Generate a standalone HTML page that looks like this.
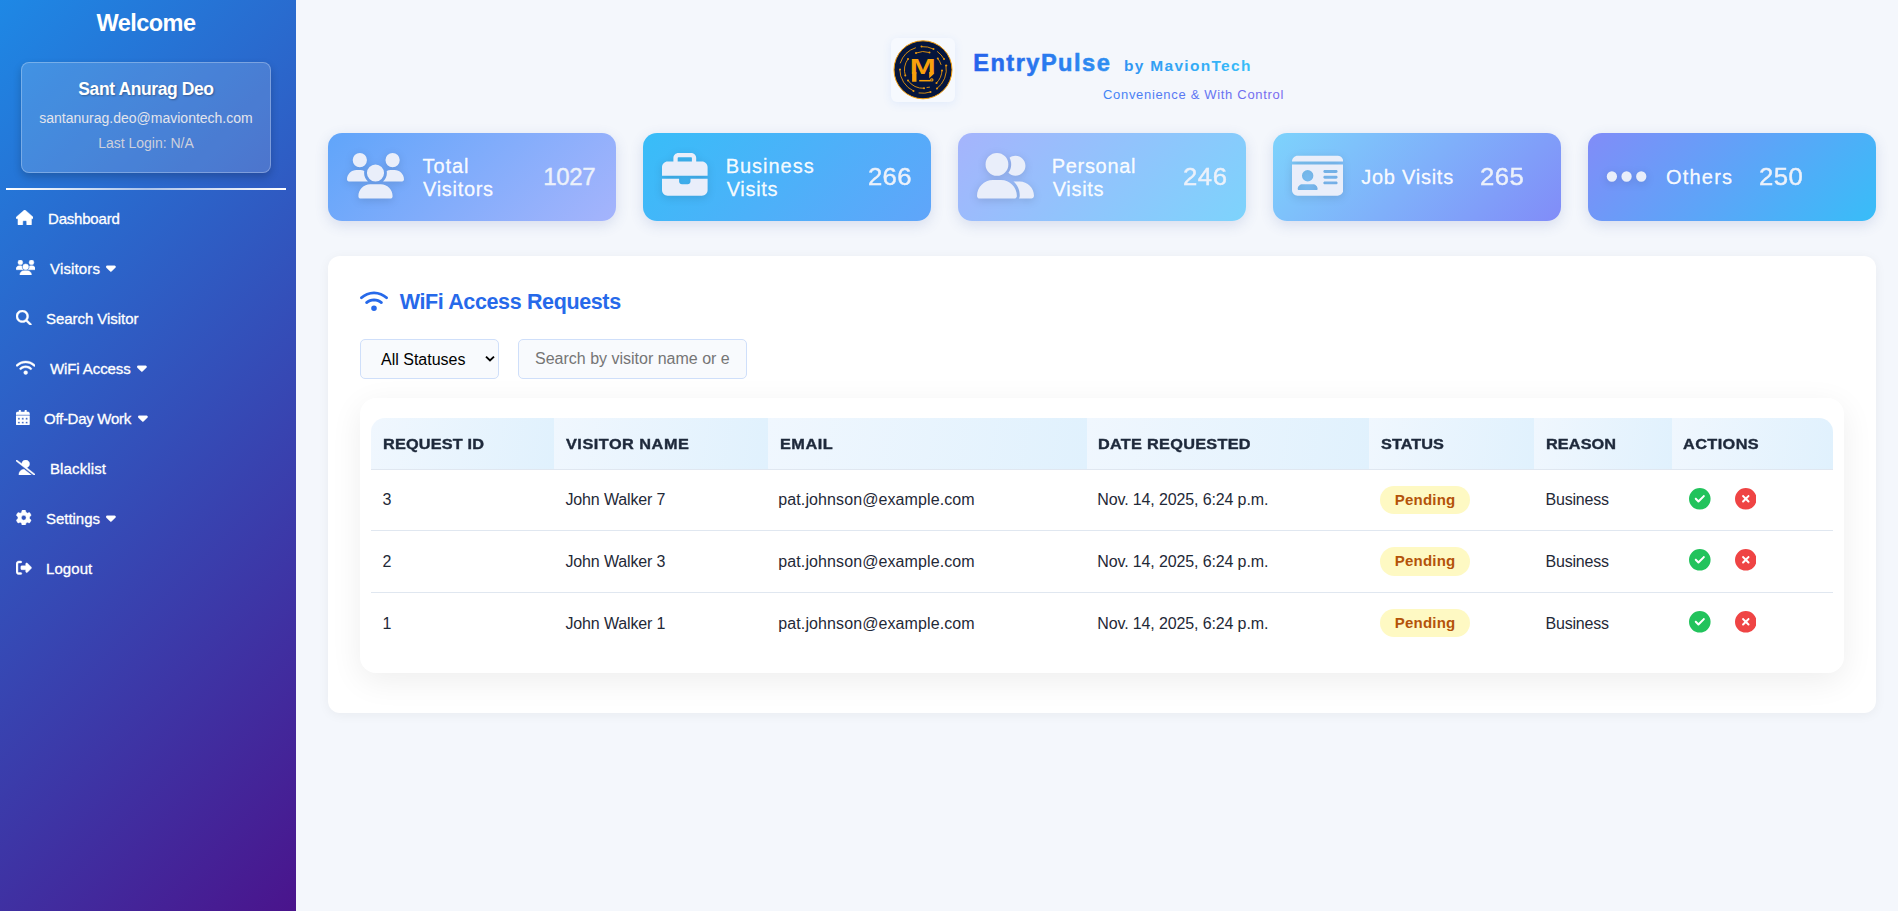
<!DOCTYPE html>
<html lang="en">
<head>
<meta charset="utf-8">
<title>EntryPulse - WiFi Access Requests</title>
<style>
*{box-sizing:border-box;margin:0;padding:0}
html,body{width:1898px;height:911px;overflow:hidden}
body{background:#f4f7fc;font-family:"Liberation Sans",Arial,sans-serif;color:#1f2937;position:relative}
.abs{position:absolute;white-space:nowrap}
svg{display:block}
/* SIDEBAR */
#sidebar{position:absolute;left:0;top:0;width:296px;height:911px;background:linear-gradient(135deg,#1e88e5 0%,#4a148c 100%);color:#fff}
#welcome{left:0;width:292px;top:8.5px;text-align:center;font-weight:bold;font-size:23.5px;line-height:28px;letter-spacing:-.54px}
#ucard{position:absolute;left:21px;top:62px;width:250px;height:111px;border-radius:8px;background:rgba(255,255,255,.15);border:1px solid rgba(255,255,255,.28);box-shadow:0 4px 8px rgba(0,0,0,.2)}
#ucard div{position:absolute;left:0;width:248px;text-align:center;white-space:nowrap}
#uname{top:15px;font-weight:bold;font-size:17.5px;line-height:22px;letter-spacing:-.4px;text-shadow:1px 1px 2px rgba(0,0,0,.3)}
#umail{top:46px;font-size:14px;line-height:18px;color:#e2e4ec}
#ulast{top:71px;font-size:14px;line-height:18px;color:#cdd0dc}
#shr{position:absolute;left:6px;top:188px;width:280px;height:2px;background:linear-gradient(90deg,#fff,rgba(255,255,255,.6),#fff)}
.mi{position:absolute;left:0;width:296px;height:50px}
.mi svg{position:absolute;left:16px;fill:#fff;stroke:#fff;stroke-width:14px}
.mi span{position:absolute;top:15.5px;font-size:15px;line-height:20px;white-space:nowrap;color:#fff;-webkit-text-stroke:.3px #fff}
.mi svg.car{left:auto}
/* MAIN */
#main{position:absolute;left:0;top:0;width:1898px;height:911px}
#sidebar{z-index:2}
#logo{position:absolute;left:891px;top:38px;width:64px;height:64px;border-radius:6px;background:#f6f9fe;box-shadow:0 2px 10px rgba(59,130,246,.10)}
.card{position:absolute;top:133px;width:288px;height:88px;border-radius:14px;box-shadow:0 4px 14px rgba(60,90,160,.16)}
.card svg.cic{position:absolute;fill:#e9eefa;filter:drop-shadow(0 2px 4px rgba(0,0,0,.12))}
.clab{position:absolute;margin-top:-.4px;white-space:nowrap;font-size:20px;line-height:24px;color:rgba(255,255,255,.95);letter-spacing:.7px;-webkit-text-stroke:.3px rgba(255,255,255,.95)}
.cnum{position:absolute;top:28px;white-space:nowrap;font-size:24px;line-height:32px;color:#ecf1fa;letter-spacing:.5px;-webkit-text-stroke:.4px #ecf1fa}
#panel{position:absolute;left:328px;top:256px;width:1548px;height:457px;border-radius:12px;background:#fff;box-shadow:0 2px 12px rgba(0,0,0,.05)}
#ptitle svg{position:absolute}
#ptxt{left:71.7px;top:31.7px;font-weight:bold;font-size:21.5px;line-height:28px;color:#2669ea;letter-spacing:-.37px}
#sel{position:absolute;left:32px;top:83px;width:139px;height:40px;border:1px solid #cfdffa;border-radius:5px;background:#f8fafd}
#seltxt{position:absolute;left:20px;top:10px;font-size:16px;line-height:19px;color:#000;white-space:nowrap}
#inp{position:absolute;left:190px;top:83px;width:229px;height:40px;border:1px solid #cfdffa;border-radius:5px;background:#f8fafd;overflow:hidden}
#inp span{position:absolute;left:16px;top:9px;width:195px;overflow:hidden;font-size:16px;line-height:19px;color:#757575;white-space:nowrap}
#tcont{position:absolute;left:32px;top:142px;width:1484px;height:275px;border-radius:16px;background:#fff;box-shadow:0 8px 32px rgba(0,0,0,.07)}
.th{position:absolute;top:20px;height:51px;background:linear-gradient(100deg,#f0f7fe 0%,#e0f1fd 100%)}
.th span{position:absolute;left:12px;top:16.2px;font-weight:bold;font-size:15.5px;line-height:20px;color:#1e293b;white-space:nowrap;letter-spacing:.4px;display:inline-block;transform:scaleX(1.05);transform-origin:0 50%;-webkit-text-stroke:.4px #1e293b}
.hline{position:absolute;left:11px;width:1462px;height:1px;background:#e0e7f0}
.tr{position:absolute;left:0;width:1484px;height:61px}
.td{position:absolute;top:20px;margin-left:-.5px;font-size:16px;line-height:20px;color:#1f2937;white-space:nowrap}
.badge{position:absolute;width:90px;background:#fef9c3}
.bt{position:absolute;font-weight:bold;font-size:15px;line-height:20px;color:#b45309;letter-spacing:.2px;white-space:nowrap}
svg.ab{position:absolute}
</style>
</head>
<body>
<div id="sidebar">
  <div class="abs" id="welcome">Welcome</div>
  <div id="ucard">
    <div id="uname">Sant Anurag Deo</div>
    <div id="umail">santanurag.deo@maviontech.com</div>
    <div id="ulast">Last Login: N/A</div>
  </div>
  <div id="shr"></div>
  <div class="mi" style="top:193px"><svg style="top:16.6px" width="17.4375" height="15.5" viewBox="0 0 576 512"><path d="M575.8 255.5c0 18-15 32.1-32 32.1h-32l.7 160.2c0 2.7-.2 5.4-.5 8.1V472c0 22.1-17.9 40-40 40H456c-1.1 0-2.2 0-3.3-.1c-1.4 .1-2.8 .1-4.2 .1H416 392c-22.1 0-40-17.9-40-40V448 384c0-17.7-14.3-32-32-32H256c-17.7 0-32 14.3-32 32v64 24c0 22.1-17.9 40-40 40H160 128.1c-1.5 0-3-.1-4.5-.2c-1.2 .1-2.4 .2-3.6 .2H104c-22.1 0-40-17.9-40-40V360c0-.9 0-1.9 .1-2.8V287.6H32c-18 0-32-14-32-32.1c0-9 3-17 10-24L266.4 8c7-7 15-8 22-8s15 2 21 7L564.8 231.5c8 7 12 15 11 24z"/></svg><span id="m0" style="left:48px;letter-spacing:-0.2px">Dashboard</span></div>
  <div class="mi" style="top:243px"><svg style="top:16.6px" width="19.375" height="15.5" viewBox="0 0 640 512"><path d="M144 0a80 80 0 1 1 0 160A80 80 0 1 1 144 0zM512 0a80 80 0 1 1 0 160A80 80 0 1 1 512 0zM0 298.7C0 239.8 47.8 192 106.7 192h42.7c15.9 0 31 3.5 44.6 9.7c-1.3 7.2-1.9 14.7-1.9 22.3c0 38.2 16.8 72.5 43.3 96c-.2 0-.4 0-.7 0H21.3C9.6 320 0 310.4 0 298.7zM405.3 320c-.2 0-.4 0-.7 0c26.6-23.5 43.3-57.8 43.3-96c0-7.6-.7-15-1.9-22.3c13.6-6.3 28.7-9.7 44.6-9.7h42.7C592.2 192 640 239.8 640 298.7c0 11.8-9.6 21.3-21.3 21.3H405.3zM224 224a96 96 0 1 1 192 0 96 96 0 1 1 -192 0zM128 485.3C128 411.7 187.7 352 261.3 352H378.7C452.3 352 512 411.7 512 485.3c0 14.7-11.9 26.7-26.7 26.7H154.7c-14.7 0-26.7-11.9-26.7-26.7z"/></svg><span id="m1" style="left:50px;letter-spacing:0.16px">Visitors</span><svg class="car" style="left:106px;top:16.6px" width="9.6875" height="15.5" viewBox="0 0 320 512"><path d="M137.4 374.6c12.5 12.5 32.8 12.5 45.3 0l128-128c9.2-9.2 11.9-22.9 6.9-34.9s-16.6-19.8-29.6-19.8L32 192c-12.9 0-24.6 7.8-29.6 19.8s-2.2 25.7 6.9 34.9l128 128z"/></svg></div>
  <div class="mi" style="top:293px"><svg style="top:16.6px" width="15.5" height="15.5" viewBox="0 0 512 512"><path d="M416 208c0 45.9-14.9 88.3-40 122.7L502.6 457.4c12.5 12.5 12.5 32.8 0 45.3s-32.8 12.5-45.3 0L330.7 376c-34.4 25.2-76.8 40-122.7 40C93.1 416 0 322.9 0 208S93.1 0 208 0S416 93.1 416 208zM208 352a144 144 0 1 0 0-288 144 144 0 1 0 0 288z"/></svg><span id="m2" style="left:46px;letter-spacing:-0.05px">Search Visitor</span></div>
  <div class="mi" style="top:343px"><svg style="top:16.6px" width="19.375" height="15.5" viewBox="0 0 640 512"><path d="M54.2 202.9C123.2 136.7 216.8 96 320 96s196.8 40.7 265.8 106.9c12.8 12.2 33 11.8 45.2-.9s11.8-33-.9-45.2C548.8 79.6 440.6 32 320 32S91.2 79.6 9.8 156.7C-2.9 169-3.3 189.2 8.9 202s32.5 13.2 45.2 .9zM320 256c56.8 0 108.6 21.1 148.2 56c13.3 11.7 33.5 10.4 45.2-2.8s10.4-33.5-2.8-45.2C459.8 219.2 393 192 320 192s-139.8 27.2-190.5 72c-13.3 11.7-14.5 31.9-2.8 45.2s31.9 14.5 45.2 2.8c39.5-34.9 91.3-56 148.2-56zm64 160a64 64 0 1 0 -128 0 64 64 0 1 0 128 0z"/></svg><span id="m3" style="left:50px;letter-spacing:-0.1px">WiFi Access</span><svg class="car" style="left:137px;top:16.6px" width="9.6875" height="15.5" viewBox="0 0 320 512"><path d="M137.4 374.6c12.5 12.5 32.8 12.5 45.3 0l128-128c9.2-9.2 11.9-22.9 6.9-34.9s-16.6-19.8-29.6-19.8L32 192c-12.9 0-24.6 7.8-29.6 19.8s-2.2 25.7 6.9 34.9l128 128z"/></svg></div>
  <div class="mi" style="top:393px"><svg style="top:16.6px" width="13.5625" height="15.5" viewBox="0 0 448 512"><path d="M128 0c17.7 0 32 14.3 32 32V64H288V32c0-17.7 14.3-32 32-32s32 14.3 32 32V64h48c26.5 0 48 21.5 48 48v48H0V112C0 85.5 21.5 64 48 64H96V32c0-17.7 14.3-32 32-32zM0 192H448V464c0 26.5-21.5 48-48 48H48c-26.5 0-48-21.5-48-48V192zm64 80v32c0 8.8 7.2 16 16 16h32c8.8 0 16-7.2 16-16V272c0-8.8-7.2-16-16-16H80c-8.8 0-16 7.2-16 16zm128 0v32c0 8.8 7.2 16 16 16h32c8.8 0 16-7.2 16-16V272c0-8.8-7.2-16-16-16H208c-8.8 0-16 7.2-16 16zm144-16c-8.8 0-16 7.2-16 16v32c0 8.8 7.2 16 16 16h32c8.8 0 16-7.2 16-16V272c0-8.8-7.2-16-16-16H336zM64 400v32c0 8.8 7.2 16 16 16h32c8.8 0 16-7.2 16-16V400c0-8.8-7.2-16-16-16H80c-8.8 0-16 7.2-16 16zm144-16c-8.8 0-16 7.2-16 16v32c0 8.8 7.2 16 16 16h32c8.8 0 16-7.2 16-16V400c0-8.8-7.2-16-16-16H208zm112 16v32c0 8.8 7.2 16 16 16h32c8.8 0 16-7.2 16-16V400c0-8.8-7.2-16-16-16H336c-8.8 0-16 7.2-16 16z"/></svg><span id="m4" style="left:44px;letter-spacing:-0.28px">Off-Day Work</span><svg class="car" style="left:138px;top:16.6px" width="9.6875" height="15.5" viewBox="0 0 320 512"><path d="M137.4 374.6c12.5 12.5 32.8 12.5 45.3 0l128-128c9.2-9.2 11.9-22.9 6.9-34.9s-16.6-19.8-29.6-19.8L32 192c-12.9 0-24.6 7.8-29.6 19.8s-2.2 25.7 6.9 34.9l128 128z"/></svg></div>
  <div class="mi" style="top:443px"><svg style="top:16.6px" width="19.375" height="15.5" viewBox="0 0 640 512"><path d="M38.8 5.1C28.4-3.1 13.3-1.2 5.1 9.2S-1.2 34.7 9.2 42.9l592 464c10.4 8.2 25.5 6.3 33.7-4.1s6.3-25.5-4.1-33.7L353.3 251.6C407.9 237 448 187.2 448 128C448 57.3 390.7 0 320 0C250.2 0 193.5 55.8 192 125.2L38.8 5.1zM264.3 304.3C170.5 309.4 96 387.2 96 482.3c0 16.4 13.3 29.7 29.7 29.7H514.3c3.9 0 7.6-.7 11-2.1l-261-205.6z"/></svg><span id="m5" style="left:50px;letter-spacing:0.12px">Blacklist</span></div>
  <div class="mi" style="top:493px"><svg style="top:16.6px" width="15.5" height="15.5" viewBox="0 0 512 512"><path d="M495.9 166.6c3.2 8.7 .5 18.4-6.4 24.6l-43.3 39.4c1.1 8.3 1.7 16.8 1.7 25.4s-.6 17.1-1.7 25.4l43.3 39.4c6.9 6.2 9.6 15.9 6.4 24.6c-4.4 11.9-9.7 23.3-15.8 34.3l-4.7 8.1c-6.6 11-14 21.4-22.1 31.2c-5.9 7.2-15.7 9.6-24.5 6.8l-55.7-17.7c-13.4 10.3-28.2 18.9-44 25.4l-12.5 57.1c-2 9.1-9 16.3-18.2 17.8c-13.8 2.3-28 3.5-42.5 3.5s-28.7-1.2-42.5-3.5c-9.2-1.5-16.2-8.7-18.2-17.8l-12.5-57.1c-15.8-6.500000000000001-30.6-15.1-44-25.4L83.1 425.9c-8.8 2.8-18.6 .3-24.5-6.8c-8.1-9.8-15.5-20.2-22.1-31.2l-4.7-8.1c-6.1-11-11.4-22.4-15.8-34.3c-3.2-8.7-.5-18.4 6.4-24.6l43.3-39.4C64.6 273.1 64 264.6 64 256s.6-17.1 1.7-25.4L22.4 191.2c-6.9-6.2-9.6-15.9-6.4-24.6c4.4-11.9 9.7-23.3 15.8-34.3l4.7-8.1c6.6-11 14-21.4 22.1-31.2c5.9-7.2 15.7-9.6 24.5-6.8l55.7 17.7c13.4-10.3 28.2-18.9 44-25.4l12.5-57.1c2-9.1 9-16.3 18.2-17.8C227.3 1.2 241.5 0 256 0s28.7 1.2 42.5 3.5c9.2 1.5 16.2 8.7 18.2 17.8l12.5 57.1c15.8 6.5 30.6 15.1 44 25.4l55.7-17.7c8.8-2.8 18.6-.3 24.5 6.8c8.1 9.8 15.5 20.2 22.1 31.2l4.7 8.1c6.1 11 11.4 22.4 15.8 34.3zM256 336a80 80 0 1 0 0-160 80 80 0 1 0 0 160z"/></svg><span id="m6" style="left:46px;letter-spacing:-0.03px">Settings</span><svg class="car" style="left:106px;top:16.6px" width="9.6875" height="15.5" viewBox="0 0 320 512"><path d="M137.4 374.6c12.5 12.5 32.8 12.5 45.3 0l128-128c9.2-9.2 11.9-22.9 6.9-34.9s-16.6-19.8-29.6-19.8L32 192c-12.9 0-24.6 7.8-29.6 19.8s-2.2 25.7 6.9 34.9l128 128z"/></svg></div>
  <div class="mi" style="top:543px"><svg style="top:16.6px" width="15.5" height="15.5" viewBox="0 0 512 512"><path d="M377.9 105.9L500.7 228.7c7.2 7.2 11.3 17.1 11.3 27.3s-4.1 20.1-11.3 27.3L377.9 406.1c-6.4 6.4-15 9.9-24 9.9c-18.7 0-33.9-15.2-33.9-33.9l0-62.1-128 0c-17.7 0-32-14.3-32-32l0-64c0-17.7 14.3-32 32-32l128 0 0-62.1c0-18.7 15.2-33.9 33.9-33.9c9 0 17.6 3.6 24 9.9zM160 96L96 96c-17.7 0-32 14.3-32 32l0 256c0 17.7 14.3 32 32 32l64 0c17.7 0 32 14.3 32 32s-14.3 32-32 32l-64 0c-53 0-96-43-96-96L0 128C0 75 43 32 96 32l64 0c17.7 0 32 14.3 32 32s-14.3 32-32 32z"/></svg><span id="m7" style="left:46px;letter-spacing:0.08px">Logout</span></div>
</div>
<div id="main">
<!--MAINSTART-->

  <div id="logo"><svg width="64" height="64" viewBox="0 0 64 64">
    <circle cx="32" cy="31.8" r="29" fill="#05153d" stroke="#f59e0b" stroke-width="1"/>
    <g fill="none" stroke="#e8960c" stroke-width="0.9" stroke-linecap="round">
      <path d="M30.5 8.6 A23.5 23.5 0 0 1 42.5 11"/>
      <path d="M46.5 13.6 A23.5 23.5 0 0 1 53 21"/>
      <path d="M55 27.5 A23.5 23.5 0 0 1 46 50.5"/>
      <path d="M39.5 54 A23.5 23.5 0 0 1 28 55"/>
      <path d="M22.5 53 A23.5 23.5 0 0 1 8.8 31.5"/>
      <path d="M9.3 25 A23.5 23.5 0 0 1 24.5 9.8"/>
      <path d="M25 15 A18.5 18.5 0 0 1 38.5 14.5"/>
      <path d="M46.8 20.5 A18.5 18.5 0 0 1 50 26.5"/>
      <path d="M51 32.5 A18.5 18.5 0 0 1 45.5 45"/>
      <path d="M33 50.3 A18.5 18.5 0 0 1 17 42.5"/>
      <path d="M14.3 37.5 A18.5 18.5 0 0 1 17 21"/>
      <path d="M36 49.5 L38.5 49.2"/>
    </g>
    <g fill="#e8960c">
      <circle cx="30.5" cy="8.6" r="1"/><circle cx="42.5" cy="11" r="1"/><circle cx="53" cy="21" r="1"/><circle cx="55.2" cy="27.5" r="1.1"/><circle cx="46" cy="50.5" r="1"/>
      <circle cx="39.5" cy="54" r="1"/><circle cx="22.5" cy="53" r="1"/><circle cx="9" cy="31.5" r="1"/><circle cx="25" cy="15" r="1"/><circle cx="38.5" cy="14.5" r="1"/>
      <circle cx="46.8" cy="20.5" r="1"/><circle cx="51" cy="32.5" r="1"/><circle cx="45.5" cy="45" r="1"/><circle cx="33" cy="50.3" r="1"/><circle cx="17" cy="42.5" r="1"/><circle cx="14.3" cy="37.5" r="1"/><circle cx="17" cy="21" r="1"/>
    </g>
    <text id="logoM" x="0" y="35.9" text-anchor="middle" font-family="Liberation Sans, Arial, sans-serif" font-weight="bold" font-size="22" fill="#f7a10c" transform="translate(31.85 0) scale(1.42 1)">M</text>
    <path d="M21.1 34 H25.5 V43.8 H21.1 Z M38.2 34 H42.6 V36.2 L38.2 40.2 Z" fill="#f7a10c"/>
    <path d="M28.2 42.7 H39.6" stroke="#f7a10c" stroke-width="1.5" fill="none"/>
    <circle cx="40.8" cy="41.9" r="1.7" fill="#f7a10c"/>
    <circle cx="40.8" cy="41.9" r="0.6" fill="#05153d"/>
  </svg></div>
  <svg id="brandtxt" width="340" height="72" viewBox="0 0 340 72" style="position:absolute;left:965px;top:40px;overflow:visible">
    <defs>
      <linearGradient id="gb1" gradientUnits="userSpaceOnUse" x1="9" y1="0" x2="285" y2="0"><stop offset="0" stop-color="#2563eb"/><stop offset="1" stop-color="#38bdf8"/></linearGradient>
      <linearGradient id="gb2" gradientUnits="userSpaceOnUse" x1="138" y1="0" x2="318" y2="0"><stop offset="0" stop-color="#3f84f5"/><stop offset="1" stop-color="#7b68ee"/></linearGradient>
    </defs>
    <text id="bname" x="8.2" y="31.3" font-family="Liberation Sans, Arial, sans-serif" font-weight="bold" font-size="23.6" letter-spacing="1.48" fill="url(#gb1)" stroke="url(#gb1)" stroke-width=".55">EntryPulse</text>
    <text id="bby" x="159" y="31.3" font-family="Liberation Sans, Arial, sans-serif" font-weight="bold" font-size="15.5" letter-spacing="1.3" fill="url(#gb1)">by MavionTech</text>
    <text id="btag" x="138" y="59.1" font-family="Liberation Sans, Arial, sans-serif" font-size="13" letter-spacing=".68" fill="url(#gb2)">Convenience &amp; With Control</text>
  </svg>
  <div class="card" style="left:328px;background:linear-gradient(135deg,#60a5fa 0%,#a5b4fc 100%)"><svg class="cic" style="left:19px;top:20.2px" width="57" height="45.6" viewBox="0 0 640 512"><path d="M144 0a80 80 0 1 1 0 160A80 80 0 1 1 144 0zM512 0a80 80 0 1 1 0 160A80 80 0 1 1 512 0zM0 298.7C0 239.8 47.8 192 106.7 192h42.7c15.9 0 31 3.5 44.6 9.7c-1.3 7.2-1.9 14.7-1.9 22.3c0 38.2 16.8 72.5 43.3 96c-.2 0-.4 0-.7 0H21.3C9.6 320 0 310.4 0 298.7zM405.3 320c-.2 0-.4 0-.7 0c26.6-23.5 43.3-57.8 43.3-96c0-7.6-.7-15-1.9-22.3c13.6-6.3 28.7-9.7 44.6-9.7h42.7C592.2 192 640 239.8 640 298.7c0 11.8-9.6 21.3-21.3 21.3H405.3zM224 224a96 96 0 1 1 192 0 96 96 0 1 1 -192 0zM128 485.3C128 411.7 187.7 352 261.3 352H378.7C452.3 352 512 411.7 512 485.3c0 14.7-11.9 26.7-26.7 26.7H154.7c-14.7 0-26.7-11.9-26.7-26.7z"/></svg><div class="clab" id="cl0a" style="left:94.5px;top:21px;letter-spacing:0.95px">Total</div><div class="clab" id="cl0b" style="left:95px;top:44px">Visitors</div><div class="cnum" id="cn0" style="left:215.3px;letter-spacing:-0.4px">1027</div></div>
  <div class="card" style="left:643px;background:linear-gradient(135deg,#38bdf8 0%,#60a5fa 100%)"><svg class="cic" style="left:19px;top:20.2px" width="45.6" height="45.6" viewBox="0 0 512 512"><path d="M184 48H328c4.4 0 8 3.6 8 8V96H176V56c0-4.4 3.6-8 8-8zm-56 8V96H64C28.7 96 0 124.7 0 160v96H192 320 512V160c0-35.3-28.7-64-64-64H384V56c0-30.9-25.1-56-56-56H184c-30.9 0-56 25.1-56 56zM512 288H320v32c0 17.7-14.3 32-32 32H224c-17.7 0-32-14.3-32-32V288H0V416c0 35.3 28.7 64 64 64H448c35.3 0 64-28.7 64-64V288z"/></svg><div class="clab" id="cl1a" style="left:82.7px;top:21px;letter-spacing:0.98px">Business</div><div class="clab" id="cl1b" style="left:83.7px;top:44px">Visits</div><div class="cnum" id="cn1" style="left:224.8px;letter-spacing:0.3px;transform:scaleX(1.07);transform-origin:0 50%">266</div></div>
  <div class="card" style="left:958px;background:linear-gradient(135deg,#a5b4fc 0%,#7dd3fc 100%)"><svg class="cic" style="left:19px;top:20.2px" width="57" height="45.6" viewBox="0 0 640 512"><path d="M96 128a128 128 0 1 1 256 0A128 128 0 1 1 96 128zM0 482.3C0 383.8 79.8 304 178.3 304h91.4C368.2 304 448 383.8 448 482.3c0 16.4-13.3 29.7-29.7 29.7H29.7C13.3 512 0 498.7 0 482.3zM609.3 512H471.4c5.4-9.4 8.6-20.3 8.6-32v-8c0-60.7-27.1-115.2-69.8-151.8c2.4-.1 4.7-.2 7.1-.2h61.4C567.8 320 640 392.2 640 481.3c0 17-13.8 30.7-30.7 30.7zM432 256c-31 0-59-12.6-79.3-32.9C372.4 196.5 384 163.6 384 128c0-26.8-6.6-52.1-18.3-74.3C384.3 40.1 407.2 32 432 32c61.9 0 112 50.1 112 112s-50.1 112-112 112z"/></svg><div class="clab" id="cl2a" style="left:93.7px;top:21px;letter-spacing:0.7px">Personal</div><div class="clab" id="cl2b" style="left:94.7px;top:44px">Visits</div><div class="cnum" id="cn2" style="left:225.3px;letter-spacing:0.5px;transform:scaleX(1.07);transform-origin:0 50%">246</div></div>
  <div class="card" style="left:1273px;background:linear-gradient(135deg,#7dd3fc 0%,#818cf8 100%)"><svg class="cic" style="left:19px;top:20.2px" width="51.3" height="45.6" viewBox="0 0 576 512"><path d="M0 96l576 0c0-35.3-28.7-64-64-64L64 32C28.7 32 0 60.7 0 96zm0 32L0 416c0 35.3 28.7 64 64 64l448 0c35.3 0 64-28.7 64-64l0-288L0 128zM64 405.3c0-29.5 23.9-53.3 53.3-53.3l117.3 0c29.5 0 53.3 23.9 53.3 53.3c0 5.9-4.8 10.7-10.7 10.7L74.7 416c-5.9 0-10.7-4.8-10.7-10.7zM176 192a64 64 0 1 1 0 128 64 64 0 1 1 0-128zm176 16c0-8.8 7.2-16 16-16l128 0c8.8 0 16 7.2 16 16s-7.2 16-16 16l-128 0c-8.8 0-16-7.2-16-16zm0 64c0-8.8 7.2-16 16-16l128 0c8.8 0 16 7.2 16 16s-7.2 16-16 16l-128 0c-8.8 0-16-7.2-16-16zm0 64c0-8.8 7.2-16 16-16l128 0c8.8 0 16 7.2 16 16s-7.2 16-16 16l-128 0c-8.8 0-16-7.2-16-16z"/></svg><div class="clab" id="cl3a" style="left:88.2px;top:32px;letter-spacing:0.75px">Job Visits</div><div class="cnum" id="cn3" style="left:207.3px;letter-spacing:0.4px;transform:scaleX(1.07);transform-origin:0 50%">265</div></div>
  <div class="card" style="left:1588px;background:linear-gradient(135deg,#818cf8 0%,#38bdf8 100%)"><svg class="cic" style="left:18.4px;top:19.5px" width="41.125" height="47" viewBox="0 0 448 512"><path d="M8 256a56 56 0 1 1 112 0A56 56 0 1 1 8 256zm160 0a56 56 0 1 1 112 0 56 56 0 1 1 -112 0zm216-56a56 56 0 1 1 0 112 56 56 0 1 1 0-112z"/></svg><div class="clab" id="cl4a" style="left:78px;top:32px;letter-spacing:1.2px">Others</div><div class="cnum" id="cn4" style="left:171.2px;letter-spacing:0.4px;transform:scaleX(1.07);transform-origin:0 50%">250</div></div>
  <div id="panel">
    <div id="ptitle"><svg style="left:32px;top:33.7px;fill:#2669ea" width="28" height="22.4" viewBox="0 0 640 512"><path d="M54.2 202.9C123.2 136.7 216.8 96 320 96s196.8 40.7 265.8 106.9c12.8 12.2 33 11.8 45.2-.9s11.8-33-.9-45.2C548.8 79.6 440.6 32 320 32S91.2 79.6 9.8 156.7C-2.9 169-3.3 189.2 8.9 202s32.5 13.2 45.2 .9zM320 256c56.8 0 108.6 21.1 148.2 56c13.3 11.7 33.5 10.4 45.2-2.8s10.4-33.5-2.8-45.2C459.8 219.2 393 192 320 192s-139.8 27.2-190.5 72c-13.3 11.7-14.5 31.9-2.8 45.2s31.9 14.5 45.2 2.8c39.5-34.9 91.3-56 148.2-56zm64 160a64 64 0 1 0 -128 0 64 64 0 1 0 128 0z"/></svg><span class="abs" id="ptxt">WiFi Access Requests</span></div>
    <div id="sel"><span id="seltxt">All Statuses</span><svg width="12" height="8" viewBox="0 0 12 8" style="position:absolute;left:123px;top:15.4px"><path d="M2 1.6 L6 5.5 L10 1.6" fill="none" stroke="#000" stroke-width="1.9"/></svg></div>
    <div id="inp"><span id="inptxt">Search by visitor name or email</span></div>
    <div id="tcont">
      <div class="th" style="left:11px;width:183px;border-top-left-radius:14px;"><span id="th0" style="letter-spacing:0.16px">REQUEST ID</span></div>
      <div class="th" style="left:194px;width:214px;"><span id="th1" style="letter-spacing:0.48px">VISITOR NAME</span></div>
      <div class="th" style="left:408px;width:319px;"><span id="th2" style="letter-spacing:0.47px;margin-left:-0.4px">EMAIL</span></div>
      <div class="th" style="left:727px;width:282px;"><span id="th3" style="letter-spacing:0.27px;margin-left:-1px">DATE REQUESTED</span></div>
      <div class="th" style="left:1009px;width:165px;"><span id="th4" style="letter-spacing:0.04px">STATUS</span></div>
      <div class="th" style="left:1174px;width:138px;"><span id="th5" style="letter-spacing:0.09px;margin-left:-0.4px">REASON</span></div>
      <div class="th" style="left:1312px;width:161px;border-top-right-radius:14px;"><span id="th6" style="letter-spacing:0.39px;margin-left:-1px">ACTIONS</span></div>
      <div class="hline" style="top:71px"></div>
      <div class="tr" style="top:72px"><span class="td" id="td0_0" style="left:23px;letter-spacing:0px">3</span><span class="td" id="td0_1" style="left:206px;letter-spacing:-0.15px">John Walker 7</span><span class="td" id="td0_2" style="left:418.8px;letter-spacing:0.1px">pat.johnson@example.com</span><span class="td" id="td0_3" style="left:737.8px;letter-spacing:-0.13px">Nov. 14, 2025, 6:24 p.m.</span><span class="badge" style="left:1020px;top:15.8px;height:28.2px;border-radius:14.1px"></span><span class="bt" id="bd0" style="left:1034.8px;top:19.8px">Pending</span><span class="td" id="td0_5" style="left:1186px;letter-spacing:-0.19px">Business</span><svg class="ab" style="left:1329.3px;top:18.4px;fill:#22c35c" width="21.6" height="21.6" viewBox="0 0 512 512"><path d="M256 512A256 256 0 1 0 256 0a256 256 0 1 0 0 512zM369 209L241 337c-9.4 9.4-24.6 9.4-33.9 0l-64-64c-9.4-9.4-9.4-24.6 0-33.9s24.6-9.4 33.9 0l47 47L335 175c9.4-9.4 24.6-9.4 33.9 0s9.4 24.6 0 33.9z"/></svg><svg class="ab" style="left:1374.6px;top:18.4px;fill:#ef4444" width="21.6" height="21.6" viewBox="0 0 512 512"><path d="M256 512A256 256 0 1 0 256 0a256 256 0 1 0 0 512zM175 175c9.4-9.4 24.6-9.4 33.9 0l47 47 47-47c9.4-9.4 24.6-9.4 33.9 0s9.4 24.6 0 33.9l-47 47 47 47c9.4 9.4 9.4 24.6 0 33.9s-24.6 9.4-33.9 0l-47-47-47 47c-9.4 9.4-24.6 9.4-33.9 0s-9.4-24.6 0-33.9l47-47-47-47c-9.4-9.4-9.4-24.6 0-33.9z"/></svg></div>
      <div class="hline" style="top:132px"></div>
      <div class="tr" style="top:134px"><span class="td" id="td1_0" style="left:23px;letter-spacing:0px">2</span><span class="td" id="td1_1" style="left:206px;letter-spacing:-0.15px">John Walker 3</span><span class="td" id="td1_2" style="left:418.8px;letter-spacing:0.1px">pat.johnson@example.com</span><span class="td" id="td1_3" style="left:737.8px;letter-spacing:-0.13px">Nov. 14, 2025, 6:24 p.m.</span><span class="badge" style="left:1020px;top:14.9px;height:29.1px;border-radius:14.55px"></span><span class="bt" id="bd1" style="left:1034.8px;top:18.8px">Pending</span><span class="td" id="td1_5" style="left:1186px;letter-spacing:-0.19px">Business</span><svg class="ab" style="left:1329.3px;top:17.3px;fill:#22c35c" width="21.6" height="21.6" viewBox="0 0 512 512"><path d="M256 512A256 256 0 1 0 256 0a256 256 0 1 0 0 512zM369 209L241 337c-9.4 9.4-24.6 9.4-33.9 0l-64-64c-9.4-9.4-9.4-24.6 0-33.9s24.6-9.4 33.9 0l47 47L335 175c9.4-9.4 24.6-9.4 33.9 0s9.4 24.6 0 33.9z"/></svg><svg class="ab" style="left:1374.6px;top:17.3px;fill:#ef4444" width="21.6" height="21.6" viewBox="0 0 512 512"><path d="M256 512A256 256 0 1 0 256 0a256 256 0 1 0 0 512zM175 175c9.4-9.4 24.6-9.4 33.9 0l47 47 47-47c9.4-9.4 24.6-9.4 33.9 0s9.4 24.6 0 33.9l-47 47 47 47c9.4 9.4 9.4 24.6 0 33.9s-24.6 9.4-33.9 0l-47-47-47 47c-9.4 9.4-24.6 9.4-33.9 0s-9.4-24.6 0-33.9l47-47-47-47c-9.4-9.4-9.4-24.6 0-33.9z"/></svg></div>
      <div class="hline" style="top:194px"></div>
      <div class="tr" style="top:196px"><span class="td" id="td2_0" style="left:23px;letter-spacing:0px">1</span><span class="td" id="td2_1" style="left:206px;letter-spacing:-0.15px">John Walker 1</span><span class="td" id="td2_2" style="left:418.8px;letter-spacing:0.1px">pat.johnson@example.com</span><span class="td" id="td2_3" style="left:737.8px;letter-spacing:-0.13px">Nov. 14, 2025, 6:24 p.m.</span><span class="badge" style="left:1020px;top:14.9px;height:28.1px;border-radius:14.05px"></span><span class="bt" id="bd2" style="left:1034.8px;top:18.8px">Pending</span><span class="td" id="td2_5" style="left:1186px;letter-spacing:-0.19px">Business</span><svg class="ab" style="left:1329.3px;top:17.3px;fill:#22c35c" width="21.6" height="21.6" viewBox="0 0 512 512"><path d="M256 512A256 256 0 1 0 256 0a256 256 0 1 0 0 512zM369 209L241 337c-9.4 9.4-24.6 9.4-33.9 0l-64-64c-9.4-9.4-9.4-24.6 0-33.9s24.6-9.4 33.9 0l47 47L335 175c9.4-9.4 24.6-9.4 33.9 0s9.4 24.6 0 33.9z"/></svg><svg class="ab" style="left:1374.6px;top:17.3px;fill:#ef4444" width="21.6" height="21.6" viewBox="0 0 512 512"><path d="M256 512A256 256 0 1 0 256 0a256 256 0 1 0 0 512zM175 175c9.4-9.4 24.6-9.4 33.9 0l47 47 47-47c9.4-9.4 24.6-9.4 33.9 0s9.4 24.6 0 33.9l-47 47 47 47c9.4 9.4 9.4 24.6 0 33.9s-24.6 9.4-33.9 0l-47-47-47 47c-9.4 9.4-24.6 9.4-33.9 0s-9.4-24.6 0-33.9l47-47-47-47c-9.4-9.4-9.4-24.6 0-33.9z"/></svg></div>
    </div>
  </div>
<!--MAINEND-->
</div>
</body>
</html>
